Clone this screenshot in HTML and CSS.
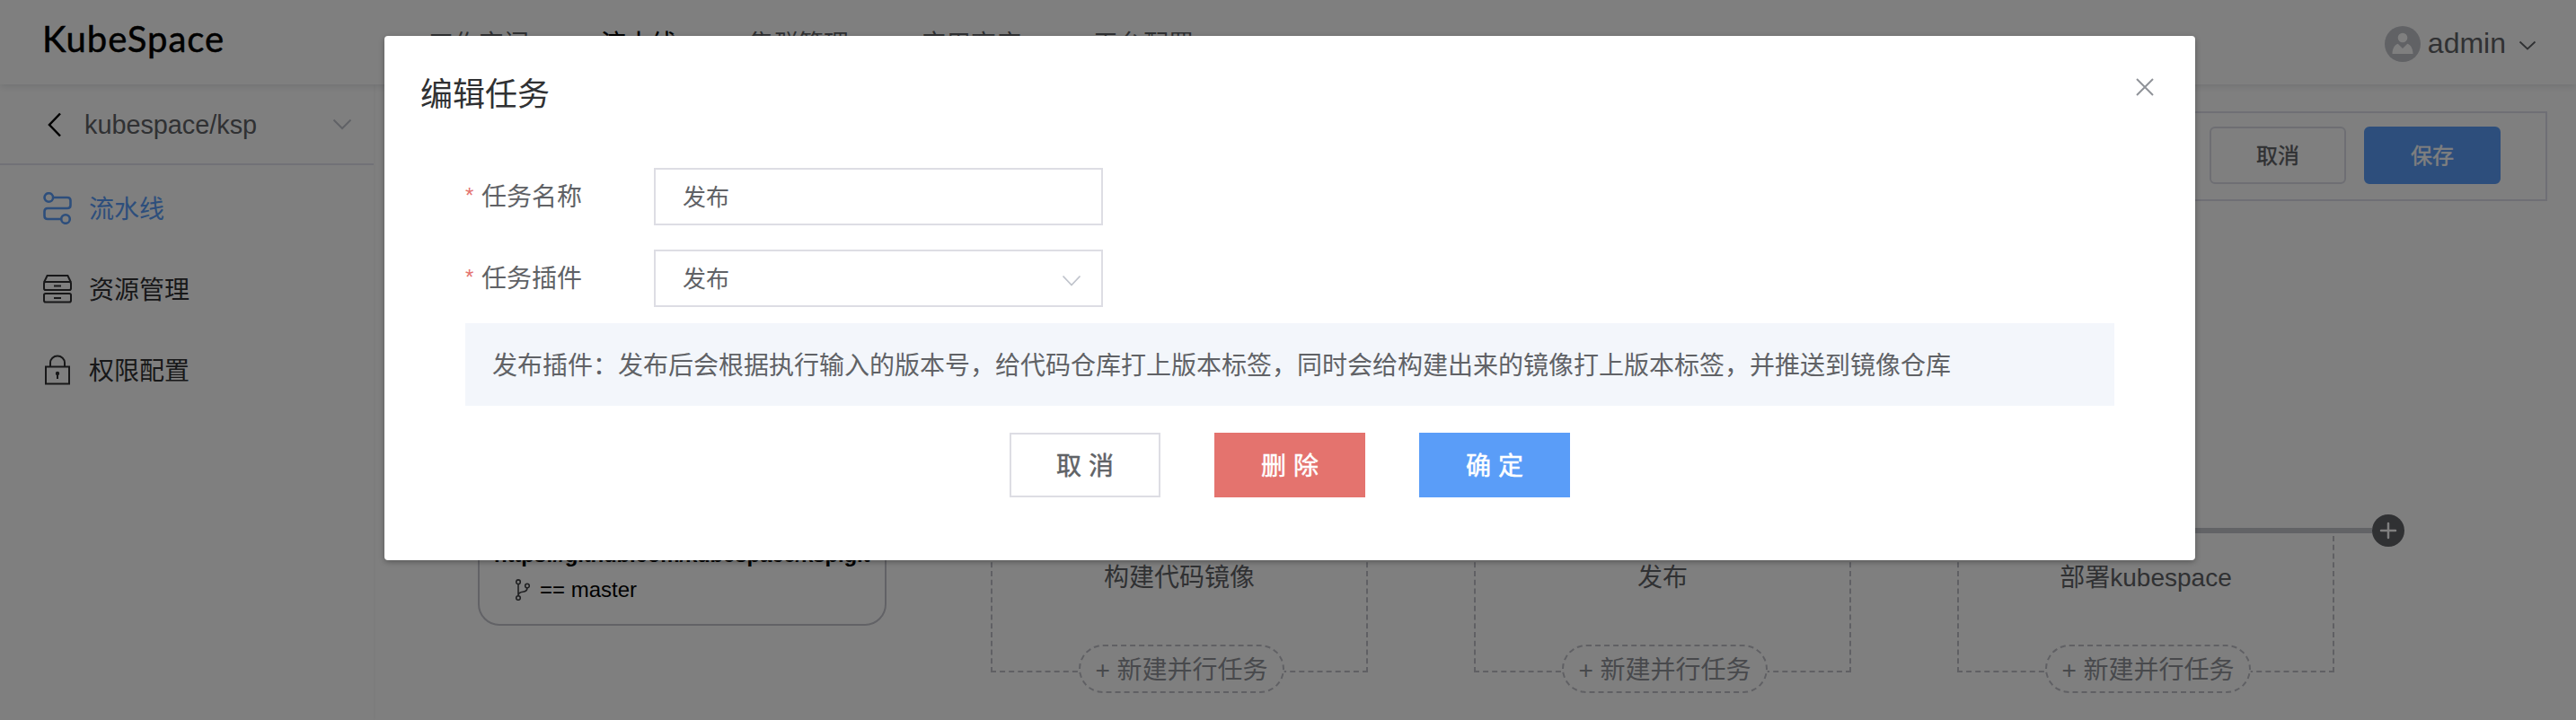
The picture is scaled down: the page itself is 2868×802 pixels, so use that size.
FILE: index.html
```html
<!DOCTYPE html>
<html lang="zh-CN">
<head>
<meta charset="utf-8">
<title>KubeSpace</title>
<link rel="stylesheet" href="styles.css">
</head>
<body>
<div class="app">
  <header class="header">
    <div class="logo">KubeSpace</div>
    <nav class="nav">
      <a>工作空间</a><a class="nav-active">流水线</a><a>集群管理</a><a>应用商店</a><a>平台配置</a>
    </nav>
    <div class="user">
      <svg class="avatar" viewBox="0 0 40 40"><circle cx="20" cy="20" r="20" fill="#c3c5cb"/><circle cx="20" cy="13" r="5.3" fill="#fff"/><path d="M8.500 31c0-6 3-10.500 6.200-11.200L20 25l5.300-5.200C28.500 20.500 31.500 25 31.500 31z" fill="#fff"/></svg>
      <span class="user-name">admin</span>
      <svg class="user-arrow" viewBox="0 0 20 12"><path d="M1.500 1.500L10 9.500l8.500-8" fill="none" stroke="#606266" stroke-width="1.800"/></svg>
    </div>
  </header>
  <div class="body">
    <aside class="sidebar">
      <div class="project">
        <svg class="back" viewBox="0 0 16 28"><path d="M14 1.500L2 14l12 12.500" fill="none" stroke="#000" stroke-width="2.500"/></svg>
        <span class="project-name">kubespace/ksp</span>
        <svg class="project-arrow" viewBox="0 0 22 14"><path d="M1.500 1.500L11 11l9.500-9.500" fill="none" stroke="#c0c4cc" stroke-width="2"/></svg>
      </div>
      <div class="menu">
        <div class="menu-item menu-active">
          <svg class="menu-icon" viewBox="0 0 32 36"><g fill="none" stroke="currentColor" stroke-width="2.600"><circle cx="6.300" cy="6" r="4.800"/><circle cx="25" cy="30" r="4.800"/><path d="M11 6h16q3.500 0 3.500 3.500v5q0 3.500-3.500 3.500H5q-3.500 0-3.500 3.500v5Q1.500 30 5 30h15"/></g></svg>
          <span class="menu-text">流水线</span>
        </div>
        <div class="menu-item">
          <svg class="menu-icon" viewBox="0 0 32 36"><g fill="none" stroke="currentColor" stroke-width="2"><path d="M1 10.500L4.600 3h22.800L31 10.500"/><rect x="1" y="10" width="30" height="9" rx="1.800"/><rect x="1" y="23" width="30" height="9.500" rx="1.800"/><path d="M12 14.500h8M12 28h8"/></g></svg>
          <span class="menu-text">资源管理</span>
        </div>
        <div class="menu-item">
          <svg class="menu-icon" viewBox="0 0 32 36"><g fill="none" stroke="currentColor" stroke-width="2"><rect x="3" y="14.500" width="26" height="19"/><path d="M8 14.500V10a8 7.500 0 0 1 16 0v4.500"/><path d="M16 22v6"/></g><circle cx="16" cy="22" r="2.200" fill="currentColor"/></svg>
          <span class="menu-text">权限配置</span>
        </div>
      </div>
    </aside>
    <main class="main">
      <div class="toolbar">
        <button class="tool-btn">取消</button>
        <button class="tool-btn tool-primary">保存</button>
      </div>
      <div class="pipeline">
        <div class="source">
          <div class="source-url">https://github.com/kubespace/ksp.git</div>
          <div class="source-branch">
            <svg class="branch" viewBox="0 0 16 24"><g fill="none" stroke="#404144" stroke-width="1.600"><circle cx="3" cy="3.200" r="2.300"/><circle cx="13" cy="7.500" r="2.300"/><circle cx="3" cy="21" r="2.300"/><path d="M3 5.500v13.200M13 9.800c0 3-2 4.200-4.800 4.500-3 .3-4.700 1.200-5.200 3.700"/></g></svg>
            <span>== master</span>
          </div>
        </div>
        <div class="stages">
          <div class="stage"><div class="stage-name">构建代码镜像</div><div class="add-job">+ 新建并行任务</div></div>
          <div class="stage"><div class="stage-name">发布</div><div class="add-job">+ 新建并行任务</div></div>
          <div class="stage"><div class="stage-name">部署kubespace</div><div class="add-job">+ 新建并行任务</div></div>
        </div>
        <div class="track">
          <div class="track-line"></div>
          <svg class="track-add" viewBox="0 0 36 36"><circle cx="18" cy="18" r="18" fill="#606266"/><path d="M10 18h16M18 10v16" stroke="#fff" stroke-width="2.500" stroke-linecap="round"/></svg>
        </div>
      </div>
    </main>
  </div>
</div>

<div class="overlay">
  <section class="dialog">
    <div class="dialog-head">
      <h2 class="dialog-title">编辑任务</h2>
      <svg class="close" viewBox="0 0 22 22"><path d="M2 2l18 18M20 2L2 20" stroke="#909399" stroke-width="2"/></svg>
    </div>
    <div class="dialog-body">
      <div class="row">
        <label class="label"><span class="star">*</span>任务名称</label>
        <div class="field">发布</div>
      </div>
      <div class="row">
        <label class="label"><span class="star">*</span>任务插件</label>
        <div class="field">发布
          <svg class="field-arrow" viewBox="0 0 22 14"><path d="M1.500 1.500L11 11.500l9.500-10" fill="none" stroke="#c0c4cc" stroke-width="1.800"/></svg>
        </div>
      </div>
      <div class="tip">发布插件：发布后会根据执行输入的版本号，给代码仓库打上版本标签，同时会给构建出来的镜像打上版本标签，并推送到镜像仓库</div>
      <div class="actions">
        <button class="btn">取 消</button>
        <button class="btn btn-danger">删 除</button>
        <button class="btn btn-primary">确 定</button>
      </div>
    </div>
  </section>
</div>
</body>
</html>
```

FILE: styles.css
```css
* { box-sizing: border-box; }

body {
  margin: 0;
  height: 802px;
  overflow: hidden;
  font-family: "Liberation Sans", "Noto Sans CJK SC", sans-serif;
  font-size: 28px;
  color: #303133;
  background: #fff;
}

svg { display: block; flex: none; }
button { font-family: inherit; margin: 0; }

/* page shell */
.app { height: 802px; display: flex; flex-direction: column; }

.header {
  flex: none;
  height: 94px;
  display: flex;
  align-items: center;
  padding: 0 44px 0 47px;
  background: #fff;
  box-shadow: 0 2px 8px rgba(0, 21, 41, .12);
  z-index: 1;
}
.logo {
  width: 430px;
  font: 400 40px/48px "Lato", sans-serif;
  color: #000;
  letter-spacing: 1px;
  -webkit-text-stroke: .5px #000;
  padding-bottom: 9px;
}
.nav { display: flex; gap: 80px; flex: 1; padding-top: 5px; line-height: 40px; color: #606266; }
.nav-active { color: #000; -webkit-text-stroke: .3px #000; }
.user { display: flex; align-items: center; padding-top: 4px; }
.avatar { width: 40px; height: 40px; }
.user-name { margin: 0 14px 2px 8px; font-size: 32px; line-height: 40px; color: #606266; }
.user-arrow { width: 20px; height: 12px; margin-top: 4px; }

.body { flex: 1; display: flex; min-height: 0; }

/* sidebar */
.sidebar { width: 416px; flex: none; box-shadow: 2px 0 3px rgba(0, 0, 0, .03); }
.project {
  height: 90px;
  display: flex;
  align-items: center;
  padding: 1px 24px 0 53px;
  border-bottom: 2px solid #e2e3ee;
}
.back { width: 16px; height: 28px; }
.project-name { flex: 1; padding: 2px 0 0 25px; color: #606266; font-size: 28.800px; }
.project-arrow { width: 22px; height: 14px; }
.menu { padding-top: 3px; }
.menu-item { height: 90px; display: flex; align-items: center; gap: 19px; padding-left: 48px; }
.menu-text { padding-bottom: 3px; }
.menu-active { color: #5a9df8; }
.menu-icon { width: 32px; height: 36px; }

/* pipeline editor */
.main { flex: 1; padding: 30px 32px 0 22px; }
.toolbar {
  height: 100px;
  display: flex;
  align-items: center;
  justify-content: flex-end;
  gap: 20px;
  padding: 0 50px 2px 0;
  border: 2px solid #dfdfea;
}
.tool-btn {
  width: 152px;
  height: 64px;
  padding: 0 0 3px;
  border: 2px solid #dcdde6;
  border-radius: 6px;
  background: #fff;
  color: #606266;
  font-size: 24px;
  -webkit-text-stroke: .4px currentColor;
}
.tool-primary { background: #5a9df8; border-color: #5a9df8; color: #fff; }

.pipeline { display: flex; align-items: flex-start; padding: 349px 0 0 94px; }
.source {
  width: 455px;
  height: 124px;
  padding: 23px 0 0 16px;
  border: 2px solid #c4c5cd;
  border-radius: 24px;
  font-size: 24px;
  line-height: 39px;
  color: #000;
}
.source-url { font-weight: bold; letter-spacing: -.16px; white-space: nowrap; }
.source-branch { display: flex; align-items: center; gap: 11px; padding-left: 24px; }
.branch { width: 16px; height: 24px; }
.stages { display: flex; gap: 118px; margin: 24px 0 0 116px; }
.stage {
  width: 420px;
  height: 152px;
  padding-top: 25px;
  border: 2px dashed #c0c1c8;
  border-top: 0;
  text-align: center;
}
.stage-name { line-height: 44px; color: #606266; }
.add-job {
  width: 229px;
  height: 54px;
  margin: 52px 0 0 96px;
  border: 2px dashed #c0c1c8;
  border-radius: 27px;
  background: #fff;
  color: #909399;
  line-height: 53px;
  white-space: nowrap;
}
.track { display: flex; align-items: center; margin-left: -155px; }
.track-line { width: 197px; height: 6px; background: #c4c6cc; }
.track-add { width: 36px; height: 36px; }

/* dialog */
.overlay {
  position: absolute;
  inset: 0;
  z-index: 10;
  padding-top: 40px;
  background: rgba(0, 0, 0, .5);
}
.dialog {
  width: 2016px;
  height: 584px;
  margin-left: 428px;
  border-radius: 4px;
  background: #fff;
  box-shadow: 0 2px 6px rgba(0, 0, 0, .3);
}
.dialog-head { height: 147px; display: flex; justify-content: space-between; padding: 40px 45px 0 40px; }
.dialog-title { margin: 0; font-size: 36px; font-weight: 400; line-height: 51px; color: #303133; }
.close { width: 22px; height: 22px; margin-top: 6px; }
.dialog-body { padding: 0 90px; color: #606266; }
.row { display: flex; margin-bottom: 27px; }
.label { width: 210px; height: 64px; display: flex; line-height: 65px; }
.star { width: 18px; color: #e4736e; font-size: 24px; line-height: 62px; }
.field {
  width: 500px;
  height: 64px;
  display: flex;
  align-items: center;
  justify-content: space-between;
  padding: 0 22px 3px 30px;
  border: 2px solid #dddde4;
  font-size: 26px;
}
.field-arrow { width: 22px; height: 14px; margin-top: 8px; }
.tip { height: 92px; margin-top: -9px; padding-left: 30px; line-height: 95px; background: #f3f6fb; white-space: nowrap; }
.actions { display: flex; justify-content: center; gap: 60px; margin-top: 30px; }
.btn {
  width: 168px;
  height: 72px;
  padding: 0 0 2px;
  border: 2px solid #dddde4;
  background: #fff;
  color: #606266;
  font-size: 28px;
  -webkit-text-stroke: .5px currentColor;
}
.btn-danger { background: #e4736e; border-color: #e4736e; color: #fff; }
.btn-primary { background: #5a9df8; border-color: #5a9df8; color: #fff; }
```
